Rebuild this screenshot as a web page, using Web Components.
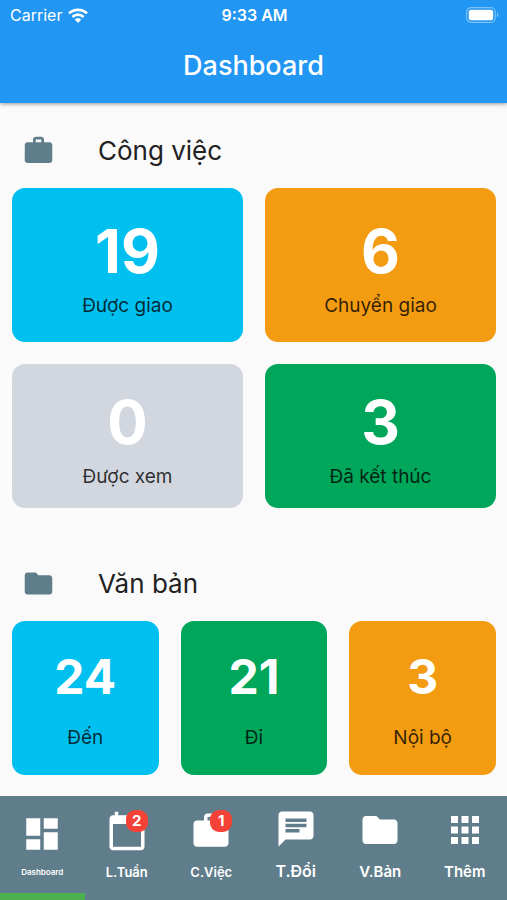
<!DOCTYPE html>
<html lang="vi">
<head>
<meta charset="utf-8">
<meta name="viewport" content="width=device-width, initial-scale=1">
<title>Dashboard</title>
<style>
    body {
        margin: 0;
        background: #fafafa;
        color: #212121;
        font-family: Inter, "Liberation Sans", sans-serif;
    }
</style>
</head>
<body>
<app-shell>
    <status-bar slot="top" carrier="Carrier" time="9:33 AM"></status-bar>
    <app-title slot="top">Dashboard</app-title>

    <dash-section icon="work" heading="Công việc">
        <card-grid columns="2">
            <stat-card color="#00c0ef" value="19">Được giao</stat-card>
            <stat-card color="#f39c12" value="6">Chuyển giao</stat-card>
            <stat-card color="#d2d6de" value="0" short>Được xem</stat-card>
            <stat-card color="#00a65a" value="3" short>Đã kết thúc</stat-card>
        </card-grid>
    </dash-section>

    <dash-section icon="folder" heading="Văn bản">
        <card-grid columns="3">
            <stat-card color="#00c0ef" value="24" small>Đến</stat-card>
            <stat-card color="#00a65a" value="21" small>Đi</stat-card>
            <stat-card color="#f39c12" value="3" small>Nội bộ</stat-card>
        </card-grid>
    </dash-section>

    <tab-bar slot="bottom">
        <tab-item icon="dashboard" size="tiny" active>Dashboard</tab-item>
        <tab-item icon="calendar" size="small" badge="2">L.Tuần</tab-item>
        <tab-item icon="work" size="small" badge="1">C.Việc</tab-item>
        <tab-item icon="chat" size="large">T.Đổi</tab-item>
        <tab-item icon="folder">V.Bản</tab-item>
        <tab-item icon="apps">Thêm</tab-item>
    </tab-bar>
</app-shell>

<script>
const ICONS = {
    work: 'M20 6h-4V4c0-1.11-.89-2-2-2h-4c-1.11 0-2 .89-2 2v2H4c-1.11 0-1.99.89-1.99 2L2 19c0 1.11.89 2 2 2h16c1.11 0 2-.89 2-2V8c0-1.11-.89-2-2-2zm-6 0h-4V4h4v2z',
    folder: 'M10 4H4c-1.1 0-1.99.9-1.99 2L2 18c0 1.1.9 2 2 2h16c1.1 0 2-.9 2-2V8c0-1.1-.9-2-2-2h-8l-2-2z',
    dashboard: 'M3 13h8V3H3v10zm0 8h8v-6H3v6zm10 0h8V11h-8v10zm0-18v6h8V3h-8z',
    calendar: 'M20 3h-1V1h-2v2H7V1H5v2H4c-1.1 0-2 .9-2 2v16c0 1.1.9 2 2 2h16c1.1 0 2-.9 2-2V5c0-1.1-.9-2-2-2zm0 18H4V8h16v13z',
    chat: 'M20 2H4c-1.1 0-1.99.9-1.99 2L2 22l4-4h14c1.1 0 2-.9 2-2V4c0-1.1-.9-2-2-2zM6 9h12v2H6V9zm8 5H6v-2h8v2zm4-6H6V6h12v2z',
    apps: 'M4 8h4V4H4v4zm6 12h4v-4h-4v4zm-6 0h4v-4H4v4zm0-6h4v-4H4v4zm6 0h4v-4h-4v4zm6-10v4h4V4h-4zm-6 4h4V4h-4v4zm6 6h4v-4h-4v4zm0 6h4v-4h-4v4z'
};

class MdIcon extends HTMLElement {
    constructor() {
        super();
        this.attachShadow({mode: 'open'});
    }

    connectedCallback() {
        this.shadowRoot.innerHTML = `
        <style>
            :host {
                display: block;
                flex: none;
                width: var(--icon-size, 24px);
                height: var(--icon-size, 24px);
            }

            svg {
                display: block;
                width: 100%;
                height: 100%;
                fill: currentColor;
            }
        </style>
        <svg viewBox="0 0 24 24" aria-hidden="true"><path d="${ICONS[this.getAttribute('name')]}"/></svg>`;
    }
}

class AppShell extends HTMLElement {
    constructor() {
        super();
        this.attachShadow({mode: 'open'}).innerHTML = `
        <style>
            :host {
                display: flex;
                flex-direction: column;
                min-height: 100vh;
            }

            header {
                background: #2196f3;
                color: #fff;
                box-shadow: 0 1px 4px rgba(0, 0, 0, .4);
            }

            main {
                flex: 1;
                display: flex;
                flex-direction: column;
                gap: 28px;
                padding: 0 11px 20px 12px;
            }

            footer {
                position: sticky;
                bottom: 0;
            }
        </style>
        <header><slot name="top"></slot></header>
        <main><slot></slot></main>
        <footer><slot name="bottom"></slot></footer>`;
    }
}

class StatusBar extends HTMLElement {
    constructor() {
        super();
        this.attachShadow({mode: 'open'}).innerHTML = `
        <style>
            :host {
                display: grid;
                grid-template-columns: 1fr auto 1fr;
                align-items: center;
                height: 30px;
                padding: 0 8px 0 10px;
                font-size: 16px;
                line-height: 20px;
            }

            .carrier {
                display: flex;
                align-items: center;
                gap: 6px;
            }

            .time {
                font-weight: 600;
            }

            .battery {
                justify-self: end;
            }

            svg {
                display: block;
            }
        </style>
        <div class="carrier">
            <span>${this.getAttribute('carrier')}</span>
            <svg width="20" height="15" viewBox="0 0 20 15" aria-hidden="true">
                <g fill="none" stroke="#fff" stroke-width="2.7">
                    <path d="M1 5.4a13 13 0 0 1 18 0"/>
                    <path d="M4.4 9a8 8 0 0 1 11.2 0"/>
                </g>
                <path fill="#fff" d="M10 15l-3.3-3.4a4.8 4.8 0 0 1 6.6 0z"/>
            </svg>
        </div>
        <span class="time">${this.getAttribute('time')}</span>
        <svg class="battery" width="33" height="16" viewBox="0 0 33 16" aria-hidden="true">
            <rect x=".7" y=".7" width="28.6" height="14.6" rx="4.5" fill="none" stroke="#fff" stroke-opacity=".4" stroke-width="1.2"/>
            <rect x="2.8" y="2.8" width="24.4" height="10.4" rx="2.5" fill="#fff"/>
            <path d="M31 5.5c1.8.8 1.8 4.2 0 5z" fill="#fff" fill-opacity=".45"/>
        </svg>`;
    }
}

class AppTitle extends HTMLElement {
    constructor() {
        super();
        this.attachShadow({mode: 'open'}).innerHTML = `
        <style>
            :host {
                display: block;
                padding: 20px 16px 21px;
            }

            h1 {
                margin: 0;
                font-size: 27px;
                font-weight: 500;
                line-height: 32px;
                text-align: center;
            }
        </style>
        <h1><slot></slot></h1>`;
    }
}

class DashSection extends HTMLElement {
    constructor() {
        super();
        this.attachShadow({mode: 'open'}).innerHTML = `
        <style>
            :host {
                display: block;
            }

            .head {
                display: flex;
                align-items: center;
                gap: 43px;
                padding: 31px 10px 21px;
            }

            md-icon {
                --icon-size: 33px;
                color: #607d8b;
            }

            h2 {
                margin: 0;
                font-size: 26px;
                font-weight: 400;
                line-height: 33px;
            }
        </style>
        <div class="head">
            <md-icon name="${this.getAttribute('icon')}"></md-icon>
            <h2>${this.getAttribute('heading')}</h2>
        </div>
        <slot></slot>`;
    }
}

class CardGrid extends HTMLElement {
    constructor() {
        super();
        const columns = parseInt(this.getAttribute('columns')) || 2;
        this.attachShadow({mode: 'open'}).innerHTML = `
        <style>
            :host {
                display: grid;
                grid-template-columns: repeat(${columns}, 1fr);
                gap: 22px;
            }
        </style>
        <slot></slot>`;
    }
}

class StatCard extends HTMLElement {
    constructor() {
        super();
        this.attachShadow({mode: 'open'}).innerHTML = `
        <style>
            :host {
                display: flex;
                flex-direction: column;
                align-items: center;
                gap: 7px;
                padding: 27px 0 24px;
                border-radius: 13px;
                background: ${this.getAttribute('color')};
                text-align: center;
            }

            :host([short]) {
                padding: 22px 0 19px;
            }

            :host([small]) {
                gap: 20px;
                padding: 27px 0 25px;
            }

            .value {
                color: #fff;
                font-size: 60px;
                font-weight: 700;
                line-height: 72px;
            }

            :host([small]) .value {
                font-size: 48px;
                line-height: 58px;
            }

            .label {
                color: rgba(0, 0, 0, .8);
                font-size: 19px;
                line-height: 24px;
            }
        </style>
        <div class="value">${this.getAttribute('value')}</div>
        <div class="label"><slot></slot></div>`;
    }
}

class TabBar extends HTMLElement {
    constructor() {
        super();
        this.attachShadow({mode: 'open'}).innerHTML = `
        <style>
            :host {
                display: block;
            }

            nav {
                display: grid;
                grid-auto-flow: column;
                grid-auto-columns: 1fr;
                height: 104px;
                background: #607d8b;
            }
        </style>
        <nav><slot></slot></nav>`;
    }
}

class TabItem extends HTMLElement {
    constructor() {
        super();
        const badge = this.getAttribute('badge');
        this.attachShadow({mode: 'open'}).innerHTML = `
        <style>
            :host {
                display: block;
            }

            button {
                display: flex;
                flex-direction: column;
                align-items: center;
                justify-content: center;
                gap: 12px;
                box-sizing: border-box;
                width: 100%;
                height: 100%;
                padding: 0;
                border: 0 solid transparent;
                border-bottom-width: 7px;
                background: none;
                color: #fff;
                font-family: inherit;
                font-size: 15px;
                font-weight: 600;
                line-height: 18px;
                cursor: pointer;
            }

            :host([active]) button {
                border-bottom-color: #4caf50;
            }

            :host([size=tiny]) button {
                font-size: 8px;
                line-height: 10px;
            }

            :host([size=small]) button {
                font-size: 13px;
                line-height: 16px;
            }

            :host([size=large]) button {
                font-size: 16px;
                line-height: 19px;
            }

            .icon {
                position: relative;
                --icon-size: 42px;
            }

            .badge {
                position: absolute;
                top: 0;
                right: 0;
                width: 22px;
                border-radius: 9px;
                background: #f44336;
                font-size: 15px;
                font-weight: 700;
                line-height: 22px;
                text-align: center;
            }
        </style>
        <button type="button">
            <span class="icon">
                <md-icon name="${this.getAttribute('icon')}"></md-icon>
                ${badge ? `<span class="badge">${badge}</span>` : ''}
            </span>
            <span><slot></slot></span>
        </button>`;
    }
}

customElements.define('md-icon', MdIcon);
customElements.define('app-shell', AppShell);
customElements.define('status-bar', StatusBar);
customElements.define('app-title', AppTitle);
customElements.define('dash-section', DashSection);
customElements.define('card-grid', CardGrid);
customElements.define('stat-card', StatCard);
customElements.define('tab-bar', TabBar);
customElements.define('tab-item', TabItem);
</script>
</body>
</html>
